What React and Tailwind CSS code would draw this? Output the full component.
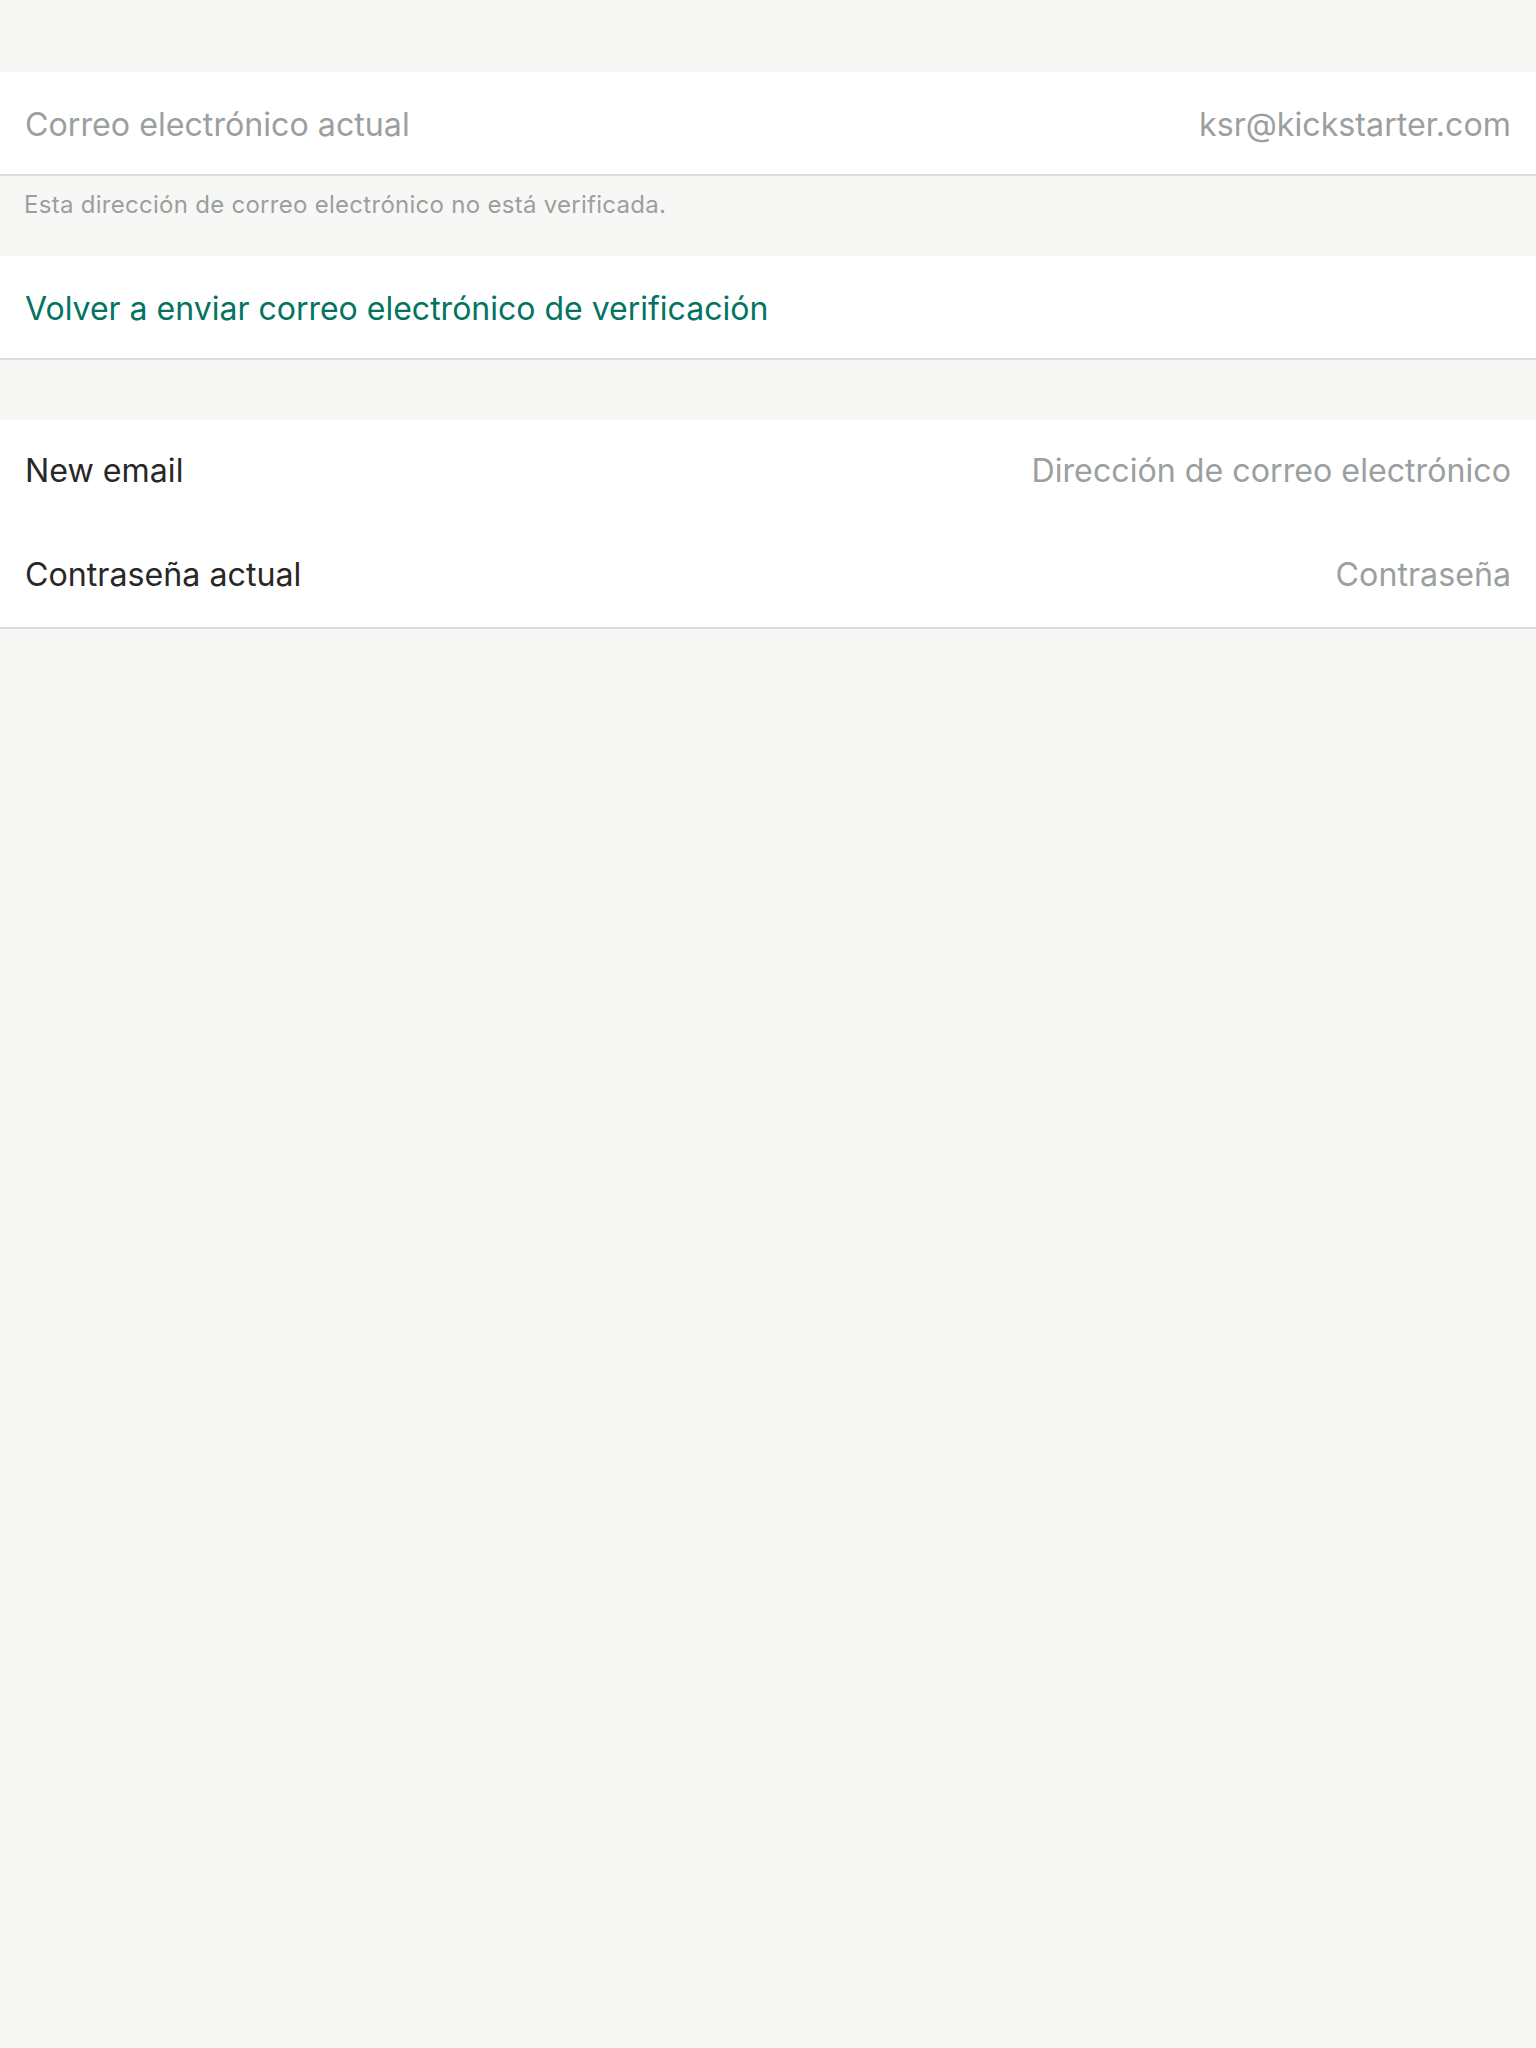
export default function App() {
  const font = { fontFamily: 'Inter, "Noto Sans", sans-serif' };

  return (
    <div className="min-h-screen w-full bg-[#f7f7f6] pt-[72px]" style={font}>
      {/* Current email */}
      <div className="bg-white border-b-2 border-[#dcdcdc]">
        <div className="h-[102px] flex items-center justify-between px-[25px] pt-[5px] text-[32.2px] text-[#9b9fa0]">
          <span>Correo electrónico actual</span>
          <span>ksr@kickstarter.com</span>
        </div>
      </div>

      <div className="h-[80px] px-[24px] pt-[11px] text-[24px] tracking-[0.28px] text-[#9b9fa0]">
        Esta dirección de correo electrónico no está verificada.
      </div>

      {/* Resend verification */}
      <div className="bg-white border-b-2 border-[#dcdcdc]">
        <div className="h-[102px] flex items-center px-[25px] pt-[3px] text-[32px] text-[#037362]">
          Volver a enviar correo electrónico de verificación
        </div>
      </div>

      <div className="h-[60px]" />

      {/* New email form */}
      <div className="bg-white border-b-2 border-[#dcdcdc]">
        <div className="h-[103px] flex items-center justify-between px-[25px] text-[32.2px]">
          <span className="text-[#282828]">New email</span>
          <span className="text-[#9b9fa0]">Dirección de correo electrónico</span>
        </div>
        <div className="h-[104px] flex items-center justify-between px-[25px] text-[32.2px]">
          <span className="text-[#282828]">Contraseña actual</span>
          <span className="text-[#9b9fa0]">Contraseña</span>
        </div>
      </div>
    </div>
  );
}
